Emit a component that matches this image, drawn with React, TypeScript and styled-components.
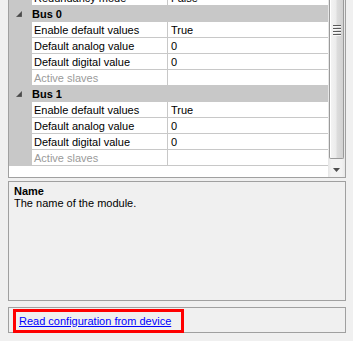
import React from "react";
import styled, { createGlobalStyle } from "styled-components";

const LINE = "#c8c8c8";
const BORDER = "#a0a0a0";

const GlobalStyle = createGlobalStyle`
  html, body {
    margin: 0;
    padding: 0;
    background: #f0f0f0;
  }
  body {
    font-family: "Liberation Sans", Arial, sans-serif;
    font-size: 11px;
    color: #000;
  }
`;

const Page = styled.div`
  width: 353px;
  height: 341px;
  padding-left: 8px;
  box-sizing: border-box;
  display: flex;
  flex-direction: column;
  overflow: hidden;
`;

const Grid = styled.div`
  width: 338px;
  height: 178px;
  box-sizing: border-box;
  border: 1px solid ${BORDER};
  border-top: none;
  background: #fff;
  display: flex;
  overflow: hidden;
`;

const RowsViewport = styled.div`
  flex: 1;
  overflow: hidden;
`;

const RowsList = styled.div<{ $offset: number }>`
  margin-top: ${(p) => -p.$offset}px;
  display: flex;
  flex-direction: column;
`;

const CategoryRow = styled.div`
  height: 16px;
  background: ${LINE};
  display: flex;
  align-items: center;
`;

const ExpandGlyph = styled.svg`
  width: 6px;
  height: 6px;
  margin-left: 7px;
  margin-right: 10px;
  flex: none;
`;

const CategoryTitle = styled.span`
  font-weight: bold;
  line-height: 17px;
  height: 16px;
  overflow: hidden;
`;

const PropRow = styled.div`
  display: grid;
  grid-template-columns: 23px 136px 1fr;
  height: 16px;
`;

const MarginCell = styled.div`
  background: ${LINE};
`;

const Cell = styled.div<{ $muted?: boolean }>`
  height: 16px;
  box-sizing: border-box;
  border-bottom: 1px solid ${LINE};
  line-height: 17px;
  overflow: hidden;
  white-space: nowrap;
  color: ${(p) => (p.$muted ? "#9a9a9a" : "#000")};
`;

const LabelCell = styled(Cell)`
  border-right: 1px solid ${LINE};
  padding-left: 2px;
`;

const ValueCell = styled(Cell)`
  padding-left: 3px;
`;

const Scrollbar = styled.div`
  width: 17px;
  flex: none;
  display: flex;
  flex-direction: column;
  background: linear-gradient(to right, #e6e6e6 0%, #f2f2f2 20%, #f2f2f2 80%, #e8e8e8 100%);
`;

const Thumb = styled.div`
  height: 159px;
  margin: 0 1px;
  box-sizing: border-box;
  border: 1px solid #9a9a9a;
  border-top: none;
  border-radius: 0 0 2px 2px;
  background: linear-gradient(to right, #f4f4f4 0%, #ececec 45%, #dcdcdc 55%, #d2d2d2 100%);
  box-shadow: inset 1px 0 0 #ffffff;
  padding-top: 25px;
  display: flex;
  flex-direction: column;
  align-items: center;
`;

const Grip = styled.div`
  width: 8px;
  display: flex;
  flex-direction: column;
  margin-left: 1px;
`;

const GripLine = styled.div`
  height: 1px;
  background: #5a5a5a;
  border-bottom: 1px solid #f8f8f8;
  margin-bottom: 1px;
  &:last-child {
    margin-bottom: 0;
  }
`;

const ScrollButton = styled.div`
  margin-top: auto;
  height: 17px;
  display: flex;
  align-items: center;
  justify-content: center;
  padding-top: 2px;
  box-sizing: border-box;
`;

const DescPanel = styled.div`
  margin-top: 3px;
  width: 338px;
  height: 120px;
  box-sizing: border-box;
  border: 1px solid ${BORDER};
  padding: 3px 5px;
  line-height: 12px;
`;

const DescTitle = styled.div`
  font-weight: bold;
`;

const DescText = styled.div``;

const CommandsPanel = styled.div`
  margin-top: 6px;
  width: 338px;
  height: 26px;
  box-sizing: border-box;
  border: 1px solid ${BORDER};
  padding: 1px 0 0 4px;
  display: flex;
  align-items: flex-start;
`;

const Highlight = styled.div`
  width: 171px;
  height: 24px;
  box-sizing: border-box;
  border: 3px solid #ff0000;
  padding-left: 3px;
  display: flex;
  align-items: center;
  flex: none;
`;

const Link = styled.a`
  color: #0000ff;
  text-decoration: underline;
  line-height: 18px;
  cursor: pointer;
`;

type Prop = { label: string; value: string; muted?: boolean };

const busRows: Prop[] = [
  { label: "Enable default values", value: "True" },
  { label: "Default analog value", value: "0" },
  { label: "Default digital value", value: "0" },
  { label: "Active slaves", value: "", muted: true },
];

const categories = [
  { name: "Bus 0", rows: busRows },
  { name: "Bus 1", rows: busRows },
];

const Row = ({ p }: { p: Prop }) => (
  <PropRow>
    <MarginCell />
    <LabelCell $muted={p.muted}>{p.label}</LabelCell>
    <ValueCell>{p.value}</ValueCell>
  </PropRow>
);

export default function App() {
  return (
    <>
      <GlobalStyle />
      <Page>
        <Grid>
          <RowsViewport>
            <RowsList $offset={10}>
              <Row p={{ label: "Redundancy mode", value: "False" }} />
              {categories.map((c) => (
                <React.Fragment key={c.name}>
                  <CategoryRow>
                    <ExpandGlyph viewBox="0 0 6 6">
                      <polygon points="6,0 6,6 0,6" fill="#4a4a4a" stroke="#8a8a8a" strokeWidth="0.5" />
                    </ExpandGlyph>
                    <CategoryTitle>{c.name}</CategoryTitle>
                  </CategoryRow>
                  {c.rows.map((r) => (
                    <Row key={c.name + r.label} p={r} />
                  ))}
                </React.Fragment>
              ))}
            </RowsList>
          </RowsViewport>
          <Scrollbar>
            <Thumb>
              <Grip>
                <GripLine />
                <GripLine />
                <GripLine />
                <GripLine />
              </Grip>
            </Thumb>
            <ScrollButton>
              <svg width="7" height="4" viewBox="0 0 7 4">
                <polygon points="0,0 7,0 3.5,4" fill="#4d4d4d" />
              </svg>
            </ScrollButton>
          </Scrollbar>
        </Grid>
        <DescPanel>
          <DescTitle>Name</DescTitle>
          <DescText>The name of the module.</DescText>
        </DescPanel>
        <CommandsPanel>
          <Highlight>
            <Link>Read configuration from device</Link>
          </Highlight>
        </CommandsPanel>
      </Page>
    </>
  );
}
